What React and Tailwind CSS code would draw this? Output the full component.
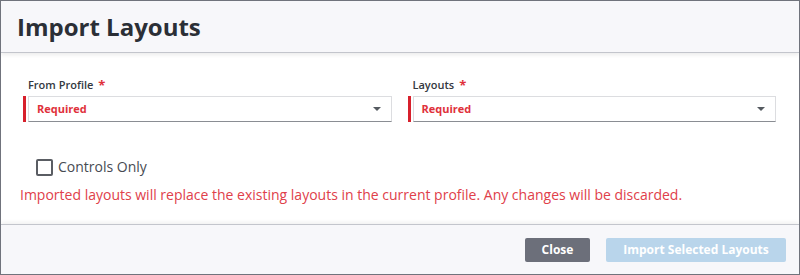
import React from "react";

function Caret() {
  return (
    <svg width="8" height="4" viewBox="0 0 8 4" className="shrink-0">
      <path d="M0 0 L8 0 L4 4 Z" fill="#555a60" />
    </svg>
  );
}

function Field({ label }) {
  return (
    <div className="flex flex-col">
      <div className="pl-[5px] text-[11px] leading-[15px] font-semibold text-[#333840] mb-[4px] flex items-center gap-[5px]">
        <span>{label}</span>
        <span className="text-[#e0313b] text-[13px] font-bold leading-[15px] translate-y-[1px]">*</span>
      </div>
      <div className="flex items-stretch h-[26px]">
        <div className="w-[3px] bg-[#d7202c] shrink-0" />
        <div className="ml-[2px] flex-1 flex items-center justify-between bg-white border border-[#dcdde0] border-b-[#8a8d93] pl-[8px] pr-[10px]">
          <span className="text-[11px] leading-[15px] font-bold text-[#e0313b] -translate-y-[1px]">Required</span>
          <Caret />
        </div>
      </div>
    </div>
  );
}

export default function App() {
  return (
    <div
      className="w-[800px] h-[275px] border border-[#70737c] bg-white flex flex-col overflow-hidden"
      style={{ fontFamily: '"Open Sans", sans-serif' }}
    >
      <div className="h-[52px] shrink-0 bg-[#f7f7fa] border-b border-[#c3c5cc] shadow-[0_2px_4px_rgba(0,0,0,0.08)] flex items-center pl-[16px] relative z-10">
        <h1 className="text-[24px] leading-[32px] font-bold text-[#2b2f36]">Import Layouts</h1>
      </div>
      <div className="flex-1 pt-[24px] pl-[22px] pr-[23px]">
        <div className="grid grid-cols-2 gap-x-[16px]">
          <Field label="From Profile" />
          <Field label="Layouts" />
        </div>
        <div className="mt-[35px] pl-[13px] flex items-center h-[20px]">
          <div className="w-[17px] h-[17px] border-2 border-[#5a5d63] rounded-[2px] bg-white" />
          <span className="ml-[5px] text-[14px] leading-[20px] text-[#474b52]">Controls Only</span>
        </div>
        <p className="mt-[8px] -ml-[3px] text-[14px] leading-[20px] text-[#e0404a]">
          Imported layouts will replace the existing layouts in the current profile. Any changes will be discarded.
        </p>
      </div>
      <div className="h-[50px] shrink-0 bg-[#f7f7fa] border-t border-[#c3c5cc] shadow-[0_-2px_4px_rgba(0,0,0,0.06)] flex items-center justify-end gap-[16px] pr-[13px]">
        <button className="w-[65px] h-[24px] rounded-[2px] bg-[#6c6f7a] text-white text-[12px] font-bold">Close</button>
        <button className="w-[180px] h-[24px] rounded-[2px] bg-[#b9d5eb] text-white text-[12px] font-bold">Import Selected Layouts</button>
      </div>
    </div>
  );
}
